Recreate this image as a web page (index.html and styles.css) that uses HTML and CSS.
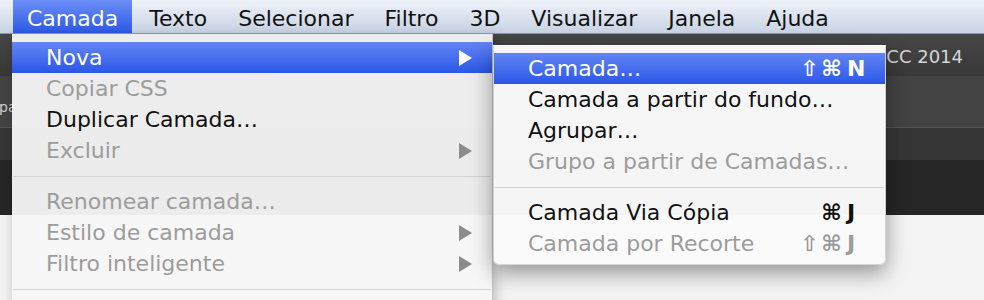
FILE: index.html
```html
<!DOCTYPE html>
<html lang="pt">
<head>
    <meta charset="UTF-8">
    <meta name="viewport" content="width=device-width, initial-scale=1.0">
    <title>Camada &gt; Nova</title>
    <link rel="stylesheet" href="styles.css">
</head>
<body>
    <div class="screen">
        <!-- Menu bar -->
        <nav class="menubar">
            <span class="mb-item active">Camada</span>
            <span class="mb-item">Texto</span>
            <span class="mb-item">Selecionar</span>
            <span class="mb-item">Filtro</span>
            <span class="mb-item">3D</span>
            <span class="mb-item">Visualizar</span>
            <span class="mb-item">Janela</span>
            <span class="mb-item">Ajuda</span>
        </nav>

        <!-- Photoshop window behind the menus -->
        <div class="workspace">
            <div class="titlebar"><span class="app-title">CC 2014</span></div>
            <div class="optionsbar"><span class="opt-label">pa</span></div>
            <div class="tabsbar"></div>
            <div class="docarea"></div>
            <div class="canvas"></div>
        </div>

        <!-- Camada menu -->
        <ul class="menu menu-main">
            <li class="item active"><span class="label">Nova</span><span class="arrow"></span></li>
            <li class="item disabled"><span class="label">Copiar CSS</span></li>
            <li class="item"><span class="label">Duplicar Camada…</span></li>
            <li class="item disabled"><span class="label">Excluir</span><span class="arrow"></span></li>
            <li class="sep"></li>
            <li class="item disabled"><span class="label">Renomear camada…</span></li>
            <li class="item disabled"><span class="label">Estilo de camada</span><span class="arrow"></span></li>
            <li class="item disabled"><span class="label">Filtro inteligente</span><span class="arrow"></span></li>
            <li class="sep"></li>
        </ul>

        <!-- Nova submenu -->
        <ul class="menu menu-sub">
            <li class="item active">
                <span class="label">Camada…</span>
                <span class="shortcut"><span class="mod">⇧</span><span class="mod">⌘</span><span class="key">N</span></span>
            </li>
            <li class="item"><span class="label">Camada a partir do fundo…</span></li>
            <li class="item"><span class="label">Agrupar…</span></li>
            <li class="item disabled"><span class="label">Grupo a partir de Camadas…</span></li>
            <li class="sep"></li>
            <li class="item">
                <span class="label">Camada Via Cópia</span>
                <span class="shortcut"><span class="mod">⌘</span><span class="key">J</span></span>
            </li>
            <li class="item disabled">
                <span class="label">Camada por Recorte</span>
                <span class="shortcut"><span class="mod">⇧</span><span class="mod">⌘</span><span class="key">J</span></span>
            </li>
        </ul>
    </div>
</body>
</html>
```

FILE: styles.css
```css
body {
    margin: 0;
    font-family: 'DejaVu Sans', 'Liberation Sans', sans-serif;
    font-size: 22px;
    color: #111;
    overflow: hidden;
}
.screen {
    position: relative;
    width: 984px;
    height: 300px;
    overflow: hidden;
    display: flex;
    flex-direction: column;
}

/* menu bar */
.menubar {
    display: flex;
    gap: 3px;
    height: 34px;
    box-sizing: border-box;
    padding-left: 13px;
    background: linear-gradient(#eef2f9, #c8d3e4);
    border-bottom: 1px solid #8e99ad;
}
.mb-item {
    height: 33px;
    box-sizing: border-box;
    padding: 4px 14px 0;
    line-height: 29px;
    color: #111;
}
.mb-item.active {
    color: #fff;
    background: linear-gradient(#6b8ef6, #2c59e8);
}

/* photoshop window */
.workspace {
    flex: 1;
    display: flex;
    flex-direction: column;
}
.titlebar {
    height: 42px;
    display: flex;
    align-items: center;
    justify-content: flex-end;
    padding-right: 21px;
    background: linear-gradient(#474747, #383838);
}
.app-title {
    color: #d6d6d6;
    font-size: 18px;
    padding-top: 2px;
}
.optionsbar {
    height: 51px;
    display: flex;
    align-items: center;
    background: #434343;
    border-bottom: 1px solid #555;
}
.opt-label {
    color: #cfcfcf;
    font-size: 14px;
    margin-left: -1px;
    margin-top: 10px;
}
.tabsbar {
    height: 32px;
    background: #363636;
}
.docarea {
    height: 55px;
    background: #262626;
}
.canvas {
    flex: 1;
    background: #f4f4f4;
}

/* menus */
.menu {
    position: absolute;
    margin: 0;
    list-style: none;
    box-sizing: border-box;
}
.menu-main {
    left: 12px;
    top: 34px;
    width: 481px;
    height: 300px;
    padding: 8px 0 0;
    background: rgba(247, 247, 247, 0.95);
    border-right: 1px solid #c4c4c4;
    box-shadow: 2px 4px 12px rgba(0, 0, 0, 0.25);
}
.menu-sub {
    left: 493px;
    top: 45px;
    width: 393px;
    padding: 7px 0 5px;
    background: rgba(250, 250, 250, 0.98);
    border: 1px solid rgba(0, 0, 0, 0.15);
    border-top-color: #fff;
    border-radius: 0 0 6px 6px;
    box-shadow: 0 8px 22px rgba(0, 0, 0, 0.4);
}
.item {
    display: flex;
    align-items: center;
    height: 31px;
    line-height: 31px;
    padding: 0 20px 0 34px;
    white-space: nowrap;
}
.item .label {
    flex: 1;
}
.item.disabled {
    color: #9c9c9c;
}
.item.active {
    color: #fff;
    background: linear-gradient(#6285f4, #2b57e8);
}
.arrow {
    width: 0;
    height: 0;
    border-top: 8px solid transparent;
    border-bottom: 8px solid transparent;
    border-left: 13px solid #8c8c8c;
}
.item.active .arrow {
    border-left-color: #fff;
}
.shortcut {
    display: flex;
    justify-content: flex-end;
    gap: 1px;
    font-weight: bold;
}
.mod {
    width: 21px;
    text-align: center;
}
.key {
    width: 18px;
    margin-left: 4px;
}
.sep {
    height: 1px;
    margin: 10px 1px 9px;
    background: #d3d3d3;
}
```
